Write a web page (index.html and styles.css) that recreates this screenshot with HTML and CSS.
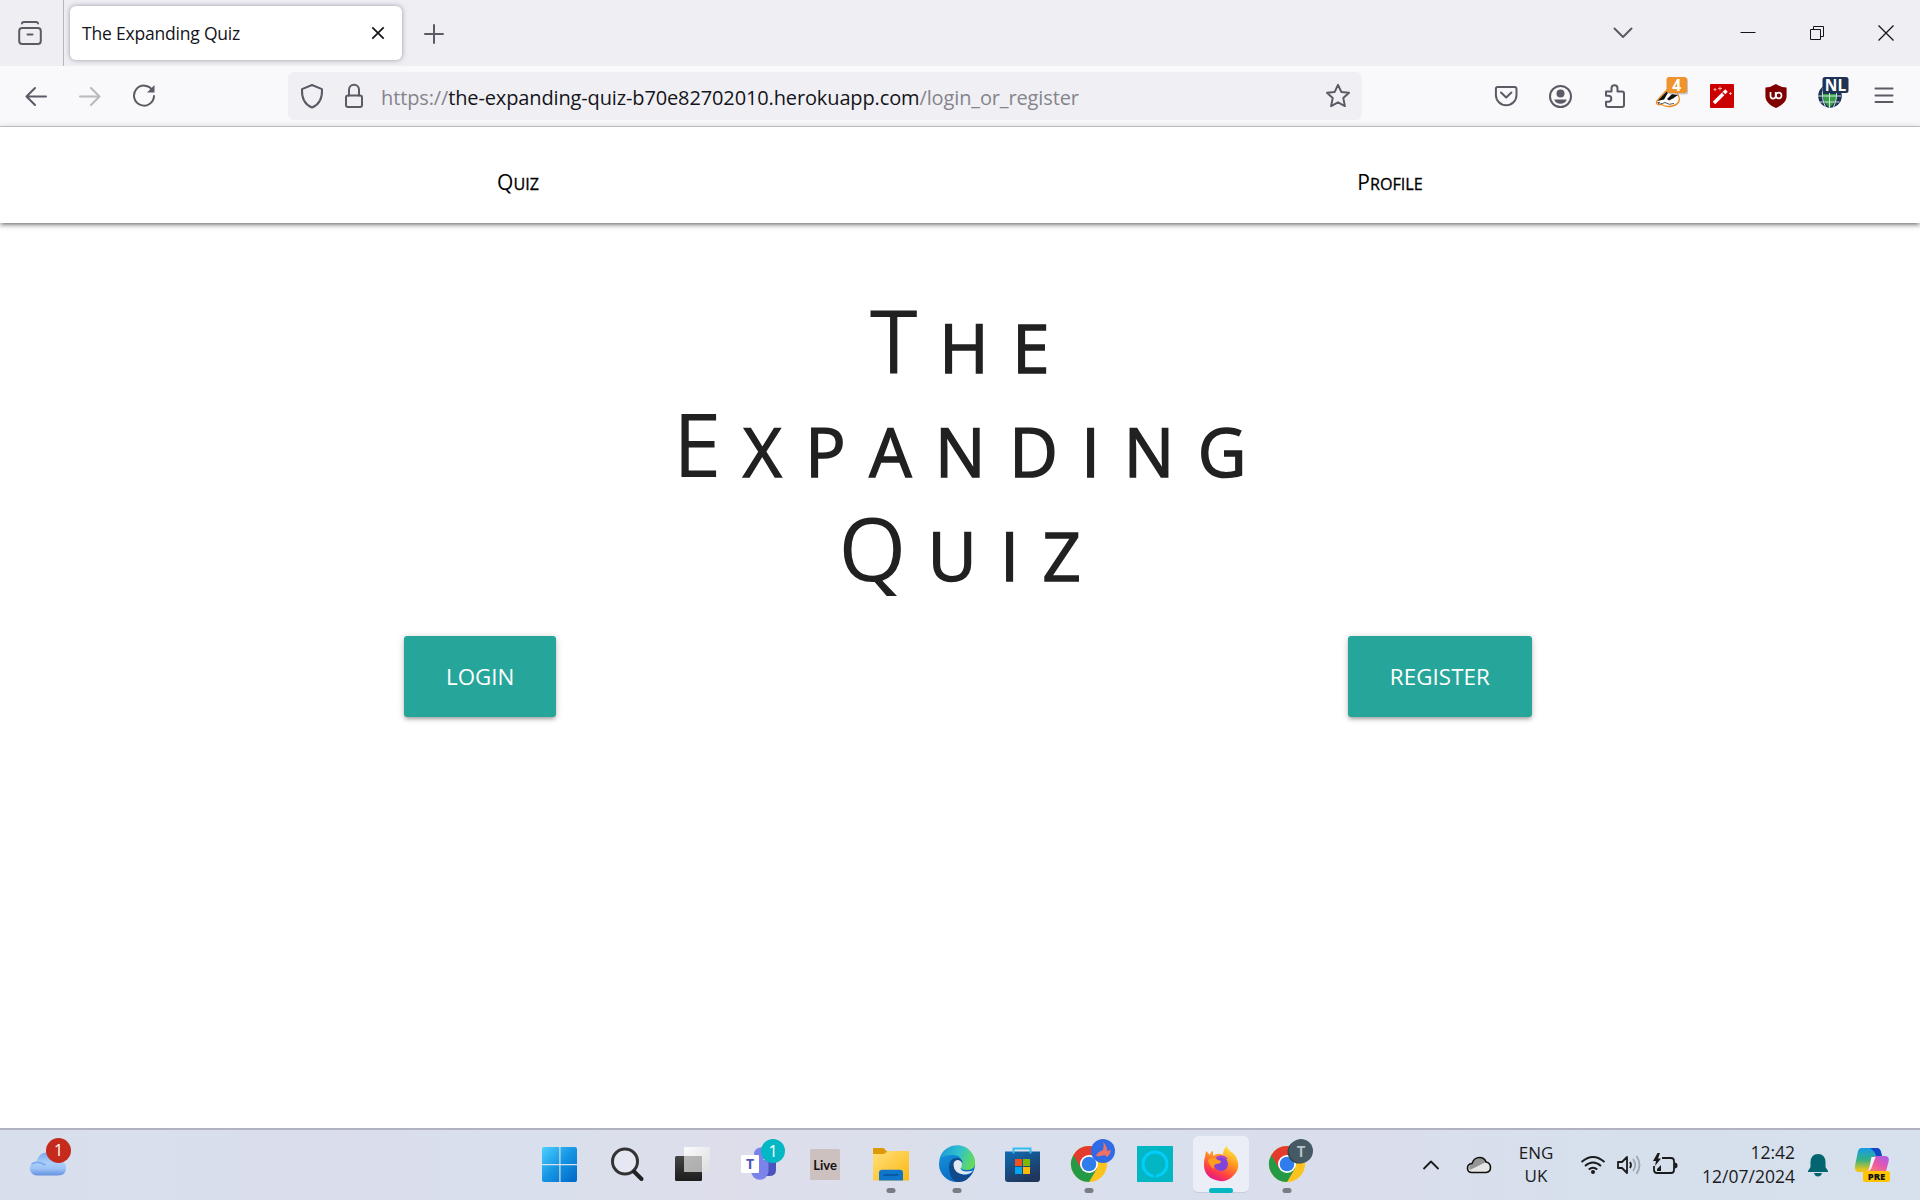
FILE: index.html
```html
<!DOCTYPE html>
<html lang="en">
<head>
<meta charset="utf-8">
<title>The Expanding Quiz</title>
<link rel="stylesheet" href="styles.css">
</head>
<body>
<header class="tabstrip">
  <div class="view-button">
    <svg width="26" height="26" viewBox="0 0 26 26" class="line"><path d="M5 3.600C5 2.400 6 2 7 2h12c1 0 2 .4 2 1.600"/><rect x="2.200" y="8" width="21.600" height="16" rx="3"/><path d="M10.500 14.500h5"/></svg>
  </div>
  <div class="tab">
    <span>The Expanding Quiz</span>
    <svg width="14" height="14" viewBox="0 0 14 14" class="close"><path d="M1.300 1.300l11.400 11.400M12.700 1.300L1.300 12.700"/></svg>
  </div>
  <svg class="new-tab line" width="20" height="20" viewBox="0 0 20 20"><path d="M10 1v18M1 10h18"/></svg>
  <div class="window-controls">
    <svg width="20" height="12" viewBox="0 0 20 12" class="line"><path d="M1.500 1.500L10 10l8.500-8.500"/></svg>
    <svg width="16" height="16" viewBox="0 0 16 16" class="win"><path d="M.5 7.500h15"/></svg>
    <svg width="16" height="16" viewBox="0 0 16 16" class="win"><path d="M1.500 4.500h10v10h-10zM4.500 4.500v-3h10v10h-3"/></svg>
    <svg width="18" height="18" viewBox="0 0 18 18" class="win x"><path d="M1.500 1.500l15 15M16.500 1.500l-15 15"/></svg>
  </div>
</header>

<div class="toolbar">
  <div class="nav-buttons">
    <svg width="24" height="24" viewBox="0 0 24 24" class="line"><path d="M22 12.500H2.500M11 4l-8.500 8.500L11 21"/></svg>
    <svg width="24" height="24" viewBox="0 0 24 24" class="line off"><path d="M2 12.500h19.500M13 4l8.500 8.500L13 21"/></svg>
    <svg width="24" height="26" viewBox="0 0 24 26" class="line"><path d="M20.600 7.500A10 10 0 1 0 22 13"/><path d="M22.500 2v7.500h-7.500z" fill="#5b5b66" stroke="none"/></svg>
  </div>
  <div class="urlbar">
    <svg width="24" height="26" viewBox="0 0 24 26" class="line"><path d="M12 2L22 6.200c.4 8-2 15-10 18.300C4 21.200 1.600 14.200 2 6.200z"/></svg>
    <svg width="20" height="26" viewBox="0 0 20 26" class="line lock"><path d="M5 12.500V6.800a5 5 0 0 1 10 0v5.700"/><rect x="2" y="12.500" width="16" height="11.500" rx="2"/></svg>
    <p class="url">https://<b>the-expanding-quiz-b70e82702010.herokuapp.com</b>/login_or_register</p>
    <svg width="26" height="26" viewBox="0 0 26 26" class="line star"><path d="M13 1.800l3.300 7.100 7.700.9-5.700 5.300 1.600 8-6.900-3.800-6.900 3.800 1.600-8L2 9.800l7.700-.9z"/></svg>
  </div>
  <!-- extension buttons, 54px apart -->
  <div class="extensions">
    <svg viewBox="0 0 54 60" class="line"><path d="M18.500 21h17q2 0 2 2v6a10.300 10.300 0 0 1-20.600 0v-6q0-2 1.600-2zM22 26.500l5.200 5 5.200-5"/></svg>
    <svg viewBox="0 0 54 60" class="line"><circle cx="27.500" cy="30.500" r="10.500"/><circle cx="27.500" cy="27.500" r="4" class="solid"/><path class="solid" d="M21.200 33.500h12.600c-1 3.200-3.400 4.300-6.300 4.300s-5.300-1.100-6.300-4.300z"/></svg>
    <svg viewBox="0 0 54 60" class="line"><path d="M19 25.500h5.500v-3.300a3 3 0 0 1 6 0v3.300H35q2 0 2 2V39q0 2-2 2H21q-2 0-2-2v-3.300h2.300a3 3 0 0 0 0-6H19z"/></svg>
    <svg viewBox="0 0 54 60">
      <path d="M15.500 35.500q5-6 8-9 3-4 8-4 6 4 7 11-1 5-7 6.500-6 1.500-11-1.500-6 1-5-3z" fill="#fff" stroke="#f08a1c" stroke-width="1.300"/><path d="M16.500 35l9-9.500 2.500-.5-5 8.500zM26 33l5-5 6 1-5 3.500-4 2zM16 36.500l3-.5-1 2z" fill="#111"/><path d="M19 38q3-.5 5-1.500 4 3 9 1" stroke="#555" fill="none"/>
      <rect x="27" y="12" width="20" height="16.500" rx="2.500" fill="#a5a5aa" opacity=".6"/><rect x="25.500" y="11" width="20.500" height="16" rx="2.500" fill="#ef932c"/><text x="35.700" y="24.800" class="badge-text">4</text>
    </svg>
    <svg viewBox="0 0 54 60"><rect x="15" y="18" width="24" height="24" rx="1" fill="#cb0000"/><path d="M19 37L31.500 24.500" stroke="#fff" stroke-width="3.600"/><path d="M27.500 26.500l2.500 2.500" stroke="#cb0000" stroke-width="1.200"/><path d="M25 20.500v4M23 22.500h4M20 22v3M18.500 23.500h3M35.500 26v3M34 27.500h3" stroke="#ffc0c0" stroke-width=".9"/></svg>
    <svg viewBox="0 0 54 60"><path d="M27 18q5 3.300 10.600 3.500V30c0 6-5 9.500-10.600 12-5.600-2.500-10.600-6-10.600-12v-8.500Q22 21.300 27 18z" fill="#800000"/><path d="M21.500 26v4a2.600 2.600 0 0 0 5.200 0v-4" stroke="#fff" stroke-width="1.700" fill="none"/><circle cx="29.700" cy="29.500" r="2.800" fill="none" stroke="#fff" stroke-width="1.700"/></svg>
    <svg viewBox="0 0 54 60"><circle cx="27" cy="30" r="11.800" fill="#1d3354"/><path d="M20 28h14q0 8-7.500 13.500Q20 37 20 28z" fill="#34a042"/><path d="M15 30h23M16.500 36h20M26.500 20v22M20 22q-2 10 2.500 19M33 22q2 10-2.500 19" fill="none" stroke="#cfe3e3"/><rect x="19.500" y="11" width="26" height="16" rx="2.500" fill="#1f3354"/><text x="32.500" y="24.800" class="badge-text">NL</text></svg>
    <svg viewBox="0 0 54 60" class="line"><path d="M18.500 22.500h17M18.500 29.500h17M18.500 36h17"/></svg>
  </div>
</div>

<main>
  <nav>
    <a class="caps">Q<span>uiz</span></a>
    <a class="caps">P<span>rofile</span></a>
  </nav>
  <h1>
    <div class="caps">T<span>he</span></div>
    <div class="caps">E<span>xpanding</span></div>
    <div class="caps">Q<span>uiz</span></div>
  </h1>
  <div class="actions">
    <a class="btn">LOGIN</a>
    <a class="btn wide">REGISTER</a>
  </div>
</main>

<footer class="taskbar">
  <svg class="weather" width="66" height="70" viewBox="0 0 66 70">
    <defs>
      <linearGradient id="cloud" x1="0" y1="0" x2="0" y2="1"><stop offset="0" stop-color="#7fa9ee"/><stop offset=".45" stop-color="#a9cff9"/><stop offset=".7" stop-color="#9cc3f6"/><stop offset="1" stop-color="#6690e2"/></linearGradient>
      <linearGradient id="win" gradientUnits="userSpaceOnUse" x1="16" y1="17" x2="51" y2="52"><stop offset="0" stop-color="#4cd0ff"/><stop offset=".5" stop-color="#1594e3"/><stop offset="1" stop-color="#0067c7"/></linearGradient>
      <linearGradient id="dark" x1="0" y1="0" x2="0" y2="1"><stop offset="0" stop-color="#454545"/><stop offset="1" stop-color="#1c1c1c"/></linearGradient>
      <linearGradient id="glass" x1="0" y1="0" x2="1" y2="1"><stop offset="0" stop-color="#fff" stop-opacity=".9"/><stop offset="1" stop-color="#ddd" stop-opacity=".85"/></linearGradient>
      <linearGradient id="folder" x1="0" y1="0" x2="1" y2="1"><stop offset="0" stop-color="#ffe07a"/><stop offset="1" stop-color="#fdb813"/></linearGradient>
      <linearGradient id="store" x1="0" y1="0" x2=".5" y2="1"><stop offset="0" stop-color="#0f6cb5"/><stop offset="1" stop-color="#20365c"/></linearGradient>
      <linearGradient id="edgeTop" x1="0" y1=".3" x2="1" y2=".6"><stop offset="0" stop-color="#1c9ad8"/><stop offset=".5" stop-color="#2fc1cc"/><stop offset="1" stop-color="#67dd55"/></linearGradient>
      <linearGradient id="edgeLow" x1="0" y1="0" x2=".5" y2="1"><stop offset="0" stop-color="#149be0"/><stop offset="1" stop-color="#0c66c0"/></linearGradient>
      <linearGradient id="fox" x1=".8" y1="0" x2=".3" y2="1"><stop offset="0" stop-color="#fff04a"/><stop offset=".4" stop-color="#ff9a1f"/><stop offset=".75" stop-color="#ff3f45"/><stop offset="1" stop-color="#e01490"/></linearGradient>
      <linearGradient id="copA" x1="0" y1="0" x2="0" y2="1"><stop offset="0" stop-color="#149be8"/><stop offset=".5" stop-color="#35b184"/><stop offset=".9" stop-color="#e5c51f"/></linearGradient>
      <linearGradient id="copB" x1="1" y1="0" x2="0" y2="1"><stop offset="0" stop-color="#a55cf0"/><stop offset=".5" stop-color="#e758a9"/><stop offset="1" stop-color="#ff8a5c"/></linearGradient>
    </defs>
    <path d="M37 45.500a7 7 0 0 1-.5-14Q39 22.500 47 22.500q7 0 9.500 7.500 9.500 0 9.500 8 0 7.500-8 7.500z" fill="url(#cloud)"/>
    <path d="M31.500 34q6-4 14 1" stroke="#7ca6ee" fill="none" stroke-width="1.500"/>
  </svg>
  <span class="count">1</span>

  <!-- pinned apps, one 66px slot each -->
  <div class="apps">
    <svg viewBox="0 0 66 70"><path d="M18 17h14.500a1.500 1.500 0 0 1 .8.500V34H16V19q0-2 2-2zM34.500 17H49q2 0 2 2v15H34.500zM16 35.200h17.300V52H18q-2 0-2-2zM34.500 35.200H51V50q0 2-2 2H34.500z" fill="url(#win)"/></svg>
    <svg viewBox="0 0 66 70"><circle cx="31" cy="31.500" r="12.500" fill="#e5e8f2" stroke="#333" stroke-width="3"/><path d="M40 41.500l7.500 7.500" stroke="#222" stroke-width="4" stroke-linecap="round"/></svg>
    <svg viewBox="0 0 66 70"><rect x="15" y="26" width="27" height="25" rx="1.500" fill="url(#dark)"/><rect x="24" y="17" width="26" height="25" rx="1" fill="url(#glass)"/><path d="M24 26h18v16H24z" fill="#9a9a9a" opacity=".6"/></svg>
    <svg viewBox="0 0 66 70"><circle cx="34.500" cy="24" r="6.500" fill="#7b83eb"/><path d="M42 31h8v9q0 6-7 6h-5z" fill="#4b53bc"/><path d="M25 30h17.500v11a8.700 8.700 0 0 1-17.400 0z" fill="#7b83eb"/><rect x="15" y="25" width="18" height="18" rx="1" fill="#fff"/><text x="24" y="39" class="teams-t">T</text><circle cx="47" cy="21" r="12" fill="#04b7c4"/><text x="47" y="27" class="teams-n">1</text></svg>
    <svg viewBox="0 0 66 70"><rect x="18" y="19" width="30" height="31" rx="1.500" fill="#cdc1c0"/><text x="33" y="39.500" class="live">Live</text></svg>
    <svg viewBox="0 0 66 70"><path d="M15 18h10.500l4 4v7H15z" fill="#dd9a07"/><path d="M15 24h11l4-3h20q1 0 1 1v28.500H15z" fill="url(#folder)"/><path d="M21 50.500V43q0-3.300 3.300-3.300h17.400Q45 39.700 45 43v7.500z" fill="#0f76cc"/><path d="M25.500 45h15" stroke="#06529b" stroke-width="1.500"/><rect x="28.500" y="58" width="9" height="5" rx="2.500" fill="#7b7d85"/></svg>
    <svg viewBox="0 0 66 70"><circle cx="33" cy="34" r="18" fill="url(#edgeLow)"/><path d="M15.500 29a18 18 0 0 1 35.500 4q0 7-8 7-6 0-6.500-2.500Q38.500 36 38 32q-1-7-9-7-9 0-13.500 4z" fill="url(#edgeTop)"/><path d="M25 37q0-9 8-9 4 0 6 5-6-5-8 1-1 9 8 11 6 1 9.500-3-5 11-16 10-7-3-7.500-15z" fill="#114a8b"/><path d="M29.500 35q0-5 5-5 3.500 1 3.500 4 0 3-1.500 4.500 1 3 6 3 4 0 6.500-1-2.500 4-9 4-10-1-10.500-9.500z" fill="#e2e8f3"/><rect x="28.500" y="58" width="9" height="5" rx="2.500" fill="#7b7d85"/></svg>
    <svg viewBox="0 0 66 70"><path d="M15 21.500h35V49q0 3-3 3H18q-3 0-3-3z" fill="url(#store)"/><path d="M23.500 23.500v-5h17v5" fill="none" stroke="#35bdf2" stroke-width="2"/><path d="M25 29h7v7h-7z" fill="#f25022"/><path d="M33 29h7v7h-7z" fill="#7fba00"/><path d="M25 37h7v7h-7z" fill="#00a4ef"/><path d="M33 37h7v7h-7z" fill="#ffb900"/></svg>
    <svg viewBox="0 0 66 70"><g id="chrome"><circle cx="33" cy="34" r="18" fill="#fcc31e"/><path d="M17.400 25A18 18 0 0 0 33 52l8-13.500-8-4.500z" fill="#259a46"/><path d="M17.400 25A18 18 0 0 1 48.600 25H33v9l-7.800 4.500z" fill="#e33b2e"/><circle cx="33" cy="34" r="9" fill="#fff"/><circle cx="33" cy="34" r="7.300" fill="#2f7cec"/><rect x="28.500" y="58" width="9" height="5" rx="2.500" fill="#7b7d85"/></g><circle cx="47" cy="21" r="12" fill="#306be5"/><path d="M47.500 12q4 5 3.500 9l4-1q-1 5-4 7-2-2-3-2-4 2-8 1 1-4 7-6 1-4 .5-8z" fill="#ef7066"/></svg>
    <svg viewBox="0 0 66 70"><rect x="15" y="16" width="36" height="36" fill="#02b6c4"/><circle cx="33" cy="34" r="12" fill="none" stroke="#02cdfb" stroke-width="3"/><path d="M31 43.500h4l-2 5z" fill="#02b6c4"/></svg>
    <svg viewBox="0 0 66 70"><rect x="5" y="6" width="56" height="57" rx="5" fill="#c8cddb"/><rect x="5" y="6" width="56" height="56" rx="5" fill="#eceef7"/><path d="M17 27l1-6 4 4q1-4 3-4v5q5-4 10-1 0-6 4-9 1 4 6 7l2 2q7 12-1 20-6 7-14 6Q17 49 16 36q-.5-5 1-9z" fill="url(#fox)"/><circle cx="33" cy="34" r="7" fill="#8044dc"/><path d="M20 30q5-4 10 0l3 1q0 3-5 3-3 1-2 5-5-3-6-9z" fill="#ff9d20"/><path d="M28 28q6-4 11 1" fill="none" stroke="#b143d0" stroke-width="2"/><rect x="21" y="58" width="24" height="5" rx="2.500" fill="#05b6c3"/></svg>
    <svg viewBox="0 0 66 70"><use href="#chrome"/><circle cx="45" cy="22" r="11.500" fill="#33454d"/><circle cx="47" cy="21" r="12" fill="#455a64"/><text x="47" y="26.500" class="avatar">T</text></svg>
  </div>

  <div class="tray">
    <svg width="18" height="12" viewBox="0 0 18 12" class="tray-line"><path d="M1.500 10L9 2.500l7.500 7.500"/></svg>
    <svg width="26" height="20" viewBox="0 0 26 20"><path d="M6 17.500q-4.500 0-4.500-4.300Q1.500 9 6 8.500q2-6 7.500-6 5 0 6.500 4.500 4.500 1 4.500 5.500t-4.500 5z" fill="#e6e6e6"/><path d="M6 8.500q2-6 7.500-6 5 0 6.500 4.500L4 15q-2.500-3 2-6.500z" fill="#969696"/><path d="M6 17.500q-4.500 0-4.500-4.300Q1.500 9 6 8.500q2-6 7.500-6 5 0 6.500 4.500 4.500 1 4.500 5.500t-4.500 5z" fill="none" stroke="#111" stroke-width="1.600"/></svg>
    <p class="lang">ENG<br>UK</p>
    <div class="status">
      <svg width="26" height="20" viewBox="0 0 26 20" class="tray-line"><path d="M1.500 7q11.500-10 23 0M5 11q8-7 16 0M8.700 14.500q4.300-3.500 8.600 0"/><circle cx="13" cy="17" r="2" fill="#1b1b1b" stroke="none"/></svg>
      <svg width="26" height="22" viewBox="0 0 26 22" class="tray-line"><path d="M2 8h4l5-5v16l-5-5H2zM14 8q2 3 0 6"/><path d="M17 5q4.500 6 0 12M20.500 2q6 9 0 18" stroke="#9fa6b2"/></svg>
      <svg width="26" height="22" viewBox="0 0 26 22" class="tray-line battery"><path d="M10 4h9q3 0 3 3v9q0 3-3 3H5q-3 0-3-3v-4"/><path d="M22.500 8.500q3 0 3 3t-3 3z" fill="#1b1b1b" stroke="none"/><path d="M5.500-1L1 7h3l-1 5 6-7.500H6L8-1zM5 17v-2l4-4v6z" fill="#1b1b1b" stroke="none"/></svg>
    </div>
    <p class="clock">12:42<br>12/07/2024</p>
    <svg class="bell" width="20" height="24" viewBox="0 0 20 24"><path d="M10 1q7 0 7.500 8v5l2.500 4v1H0v-1l2.500-4V9Q3 1 10 1zM6 20h8q-1 3.500-4 3.500T6 20z" fill="#02656f"/></svg>
    <svg class="copilot" width="38" height="38" viewBox="0 0 38 38"><path d="M8 2h15q4 0 5 4l1 4h-7l-6 13q-1 3-5 3H5q-4-1-3-6L5 5q1-3 3-3z" fill="url(#copA)"/><path d="M17 2h7q3 0 4 4l1 4h-6q-1-5-6-8z" fill="#1446c8"/><path d="M22 10h10q5 0 3.500 6L33 25H12q4 0 5-4z" fill="url(#copB)"/><path d="M18.500 11h4l-4.500 12q-1 2-4 2 2-1 2.500-4z" fill="#f7f2f7"/><rect x="10" y="25" width="27" height="11" rx="2.500" fill="#ffc400"/><text x="23.500" y="34" class="pre">PRE</text></svg>
  </div>
</footer>
</body>
</html>
```
FILE: styles.css
```css
* { box-sizing: border-box; }
body {
  margin: 0;
  width: 1920px;
  height: 1200px;
  display: flex;
  flex-direction: column;
  overflow: hidden;
  background: #fff;
  color: #15141a;
  font-family: "Open Sans", sans-serif;
}
svg { display: block; flex: none; }
p { margin: 0; }

.line { fill: none; stroke: #5b5b66; stroke-width: 2; stroke-linecap: round; stroke-linejoin: round; }
.line .solid { fill: #5b5b66; stroke: none; }
.off { opacity: .4; }

/* Tab strip */
.tabstrip { flex: none; height: 66px; display: flex; align-items: center; background: #efeef3; }
.view-button { width: 64px; height: 66px; padding: 20px 0 0 17px; border-right: 1px solid #b5b5bd; }
.tab {
  width: 332px; height: 54px; margin-left: 6px; padding: 0 17px 0 12px;
  display: flex; align-items: center; justify-content: space-between;
  background: #fff; border-radius: 6px; box-shadow: 0 0 5px rgba(80, 80, 95, .55);
  font-size: 17.5px; letter-spacing: -.2px;
}
.close { fill: none; stroke: #15141a; stroke-width: 1.7; }
.new-tab { margin-left: 22px; margin-top: 2px; }
.window-controls { margin-left: auto; display: flex; align-items: center; }
.window-controls svg:nth-child(1) { margin-right: 107px; }
.window-controls svg:nth-child(2) { margin-right: 53px; }
.window-controls svg:nth-child(3) { margin-right: 52px; }
.window-controls svg:nth-child(4) { margin-right: 25px; }
.win { fill: none; stroke: #15141a; stroke-width: 1; }
.win.x { stroke-width: 1.3; }

/* Address bar */
.toolbar { flex: none; height: 61px; display: flex; align-items: center; background: #f9f9fb; border-bottom: 1px solid #ccccd0; }
.nav-buttons { width: 288px; padding-left: 24px; display: flex; align-items: center; gap: 30px; }
.urlbar { width: 1074px; height: 48px; padding: 0 11px 0 12px; display: flex; align-items: center; background: #f0f0f4; border-radius: 6px; }
.lock { margin-left: 20px; }
.url { flex: 1; margin-left: 17px; padding-top: 3px; font-size: 20px; letter-spacing: -.13px; color: #85848c; white-space: pre; }
.url b { font-weight: 400; color: #15141a; }
.extensions { display: flex; margin-left: 117px; }
.extensions svg { width: 54px; height: 60px; }
.badge-text { font: bold 15.5px "Open Sans", sans-serif; fill: #fff; text-anchor: middle; }

/* Site */
main { flex: 1; }
nav {
  height: 96px; padding: 0 94px 0 82px; display: grid; grid-template-columns: 1fr 1fr; justify-items: center;
  box-shadow: 0 3px 3px rgba(0, 0, 0, .2), 0 4px 2px -3px rgba(0, 0, 0, .2), 0 1px 7px rgba(0, 0, 0, .25);
  color: #000; font-size: 21px; line-height: 110px;
}
.caps span { font-size: .77em; line-height: 1; text-transform: uppercase; -webkit-text-stroke: .3px currentColor; }
h1 {
  margin: 64px 0 0; height: 312px; font-weight: 400; font-size: 87px; line-height: 104px;
  letter-spacing: 23.6px; text-align: center; color: #212121;
}
h1 .caps { height: 104px; padding-left: 23px; }
h1 .caps span { margin-left: -2px; -webkit-text-stroke: 1.5px currentColor; }
.actions { display: flex; justify-content: space-between; padding: 37px 388px 0 404px; }
.btn {
  height: 81px; padding: 0 42px; display: flex; align-items: center; border-radius: 3px;
  background: #26a69a; color: #fff; font-size: 22.3px;
  box-shadow: 0 3px 3px rgba(0, 0, 0, .14), 0 4px 2px -3px rgba(0, 0, 0, .12), 0 1px 7px rgba(0, 0, 0, .2);
}
.btn.wide { letter-spacing: .12px; }

/* Taskbar */
.taskbar {
  flex: none; height: 72px; position: relative; display: flex; border-top: 2px solid #b0b3bf; color: #1b1b1b;
  background: linear-gradient(90deg, #d8dfec 0, #dadeec 18%, #d9dfec 28%, #dedeeb 38%, #d9dfec 52%, #dadeec 72%, #d6e0ed 85%, #d7e0ed 100%);
}
.count {
  position: absolute; left: 46px; top: 8px; width: 25px; height: 25px; border-radius: 50%;
  background: #c42b1c; color: #fff; font-size: 16px; line-height: 24px; text-align: center;
}
.apps { display: flex; margin-left: 460px; }
.apps svg { width: 66px; height: 70px; }
.apps svg:first-child { margin-right: 2px; }
.tray { flex: 1; display: flex; align-items: center; padding-left: 102px; }
.tray-line { fill: none; stroke: #1b1b1b; stroke-width: 1.8; stroke-linejoin: round; }
.battery { overflow: visible; }
.tray > svg:nth-child(2) { margin-left: 26px; }
.lang { width: 66px; margin: -2px 0 0 11px; font-size: 17px; line-height: 23px; text-align: center; }
.status { display: flex; align-items: center; gap: 10px; margin-left: 11px; }
.clock { width: 112px; margin: -3px 0 0 5px; font-size: 17.5px; line-height: 24px; text-align: right; }
.bell { margin-left: 13px; }
.copilot { margin-left: 25px; }
.teams-t { font: bold 14px "Open Sans", sans-serif; fill: #4b53bc; text-anchor: middle; }
.teams-n { font: 16px "Open Sans", sans-serif; fill: #fff; text-anchor: middle; }
.live { font: bold 13px "Lato", sans-serif; fill: #111; text-anchor: middle; }
.avatar { font: bold 14px "Roboto", sans-serif; fill: #b9c4c9; text-anchor: middle; }
.pre { font: 800 9.5px "Open Sans", sans-serif; fill: #111; text-anchor: middle; }
```
